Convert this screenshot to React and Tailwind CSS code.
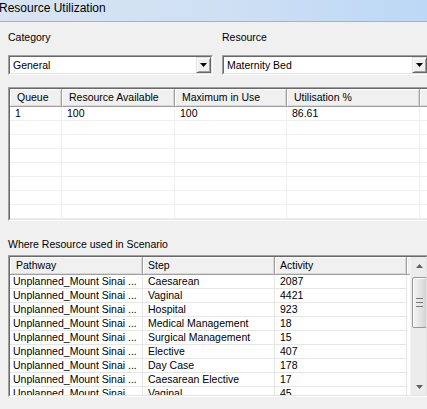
import React from "react";

const upperCols = [
  { label: "Queue", w: "w-[52px]" },
  { label: "Resource Available", w: "w-[113px]" },
  { label: "Maximum in Use", w: "w-[112px]" },
  { label: "Utilisation %", w: "w-[133px]" },
  { label: "", w: "w-[40px]" },
];

const lowerCols = [
  { label: "Pathway", w: "w-[133px]" },
  { label: "Step", w: "w-[132px]" },
  { label: "Activity", w: "w-[132px]" },
];

const rows = [
  ["Caesarean", "2087"],
  ["Vaginal", "4421"],
  ["Hospital", "923"],
  ["Medical Management", "18"],
  ["Surgical Management", "15"],
  ["Elective", "407"],
  ["Day Case", "178"],
  ["Caesarean Elective", "17"],
  ["Vaginal", "45"],
];

function DropArrow() {
  return (
    <svg width="7" height="4" viewBox="0 0 7 4" className="block">
      <path d="M0 0H7L3.5 4Z" fill="#000" />
    </svg>
  );
}

function Combo({ value, w }) {
  return (
    <div className={`${w} h-[20px] border border-t-[#a0a0a0] border-l-[#a0a0a0] border-r-white border-b-white`}>
      <div className="h-full border border-t-[#696969] border-l-[#696969] border-r-[#e3e3e3] border-b-[#e3e3e3] bg-white flex items-center">
        <span className="flex-1 pl-[3px] leading-[13px] text-black whitespace-nowrap overflow-hidden">{value}</span>
        <div className="w-[15px] h-[16px] bg-[#f0f0f0] border border-t-[#e3e3e3] border-l-[#e3e3e3] border-r-[#696969] border-b-[#696969] shadow-[inset_1px_1px_0_#ffffff,inset_-1px_-1px_0_#a0a0a0] flex items-center justify-center">
          <DropArrow />
        </div>
      </div>
    </div>
  );
}

function HeaderCell({ label, w, pad = "pl-[7px]" }) {
  return (
    <div
      className={`${w} shrink-0 h-full bg-[#f0f0f0] border-r border-b border-r-[#a0a0a0] border-b-[#a0a0a0] shadow-[inset_1px_1px_0_#ffffff,inset_-1px_-1px_0_#d8d8d8] flex items-center ${pad} whitespace-nowrap overflow-hidden`}
    >
      {label}
    </div>
  );
}

export default function App() {
  return (
    <div className="w-[427px] h-[409px] overflow-hidden bg-[#f0f0f0] text-[10.5px] text-black font-['Liberation_Sans',Arial,sans-serif]">
      {/* Title bar */}
      <div className="h-[22px] bg-linear-to-r from-[#d7e4f2] via-[#cfe0f3] to-[#bcd8f6] border-b border-[#a3b3c6] pt-[1px]">
        <div className="text-[12px] leading-[14px] -ml-[1px] whitespace-nowrap">Resource Utilization</div>
      </div>

      <div className="pl-[8px] flex flex-col">
        {/* Labels */}
        <div className="mt-[9px] flex leading-[13px]">
          <div className="w-[214px]">Category</div>
          <div>Resource</div>
        </div>

        {/* Combos */}
        <div className="mt-[11px] flex gap-[9px] w-[440px]">
          <Combo value="General" w="w-[205px] shrink-0" />
          <Combo value="Maternity Bed" w="w-[207px] shrink-0" />
        </div>

        {/* Upper table */}
        <div className="mt-[12px] w-[440px] h-[134px] border border-t-[#a0a0a0] border-l-[#a0a0a0] border-r-white border-b-white">
          <div className="h-full border border-t-[#696969] border-l-[#696969] border-r-[#e3e3e3] border-b-[#e3e3e3] bg-white overflow-hidden flex flex-col">
            <div className="h-[18px] flex shrink-0">
              {upperCols.map((c, i) => (
                <HeaderCell key={i} label={c.label} w={c.w} />
              ))}
            </div>
            {Array.from({ length: 8 }).map((_, r) => (
              <div key={r} className="h-[14px] flex shrink-0">
                {upperCols.map((c, i) => (
                  <div
                    key={i}
                    className={`${c.w} shrink-0 h-full border-r border-b border-[#efefef] pl-[5px] leading-[13px] whitespace-nowrap overflow-hidden`}
                  >
                    {r === 0 ? ["1", "100", "100", "86.61", ""][i] : ""}
                  </div>
                ))}
              </div>
            ))}
          </div>
        </div>

        {/* Label */}
        <div className="mt-[17px] leading-[13px]">Where Resource used in Scenario</div>

        {/* Lower table */}
        <div className="mt-[4px] w-[420px] h-[142px] border border-t-[#a0a0a0] border-l-[#a0a0a0] border-r-white border-b-white">
          <div className="h-full border border-t-[#696969] border-l-[#696969] border-r-[#e3e3e3] border-b-[#e3e3e3] bg-white overflow-hidden flex">
            <div className="w-[400px] shrink-0 flex flex-col overflow-hidden">
              <div className="h-[18px] flex shrink-0">
                {lowerCols.map((c, i) => (
                  <HeaderCell key={i} label={c.label} w={c.w} pad={i === 0 ? "pl-[6px]" : "pl-[5px]"} />
                ))}
                <div className="flex-1 h-full bg-[#f0f0f0] border-b border-[#a0a0a0] shadow-[inset_1px_1px_0_#ffffff]" />
              </div>
              {rows.map((r, k) => (
                <div key={k} className="h-[14px] flex shrink-0">
                  <div className="w-[133px] shrink-0 h-full border-r border-b border-[#e6e6e6] pl-[3px] leading-[13px] whitespace-nowrap overflow-hidden">
                    Unplanned_Mount Sinai ...
                  </div>
                  <div className="w-[132px] shrink-0 h-full border-r border-b border-[#e6e6e6] pl-[5px] leading-[13px] whitespace-nowrap overflow-hidden">
                    {r[0]}
                  </div>
                  <div className="w-[132px] shrink-0 h-full border-r border-b border-[#e6e6e6] pl-[5px] leading-[13px] whitespace-nowrap overflow-hidden">
                    {r[1]}
                  </div>
                </div>
              ))}
            </div>

            {/* Scrollbar */}
            <div className="w-[17px] shrink-0 h-full bg-[#ececec] border-l border-[#f4f4f4] flex flex-col items-center">
              <div className="h-[17px] w-full flex items-center justify-center">
                <svg width="7" height="4" viewBox="0 0 7 4">
                  <path d="M0 4H7L3.5 0Z" fill="#606060" />
                </svg>
              </div>
              <div className="mt-[3px] w-[15px] h-[51px] rounded-[2px] border border-[#979797] bg-linear-to-r from-[#f4f4f4] via-[#e6e6e6] to-[#d3d3d3] shadow-[inset_1px_1px_0_#ffffff] flex flex-col items-center justify-center gap-[1px]">
                <div className="w-[7px] h-[1px] bg-[#7a7a7a]" />
                <div className="w-[7px] h-[1px] bg-[#e8e8e8]" />
                <div className="w-[7px] h-[1px] bg-[#7a7a7a]" />
                <div className="w-[7px] h-[1px] bg-[#e8e8e8]" />
                <div className="w-[7px] h-[1px] bg-[#7a7a7a]" />
              </div>
              <div className="flex-1" />
              <div className="h-[17px] w-full flex items-center justify-center">
                <svg width="7" height="4" viewBox="0 0 7 4">
                  <path d="M0 0H7L3.5 4Z" fill="#606060" />
                </svg>
              </div>
            </div>
          </div>
        </div>
      </div>
    </div>
  );
}
